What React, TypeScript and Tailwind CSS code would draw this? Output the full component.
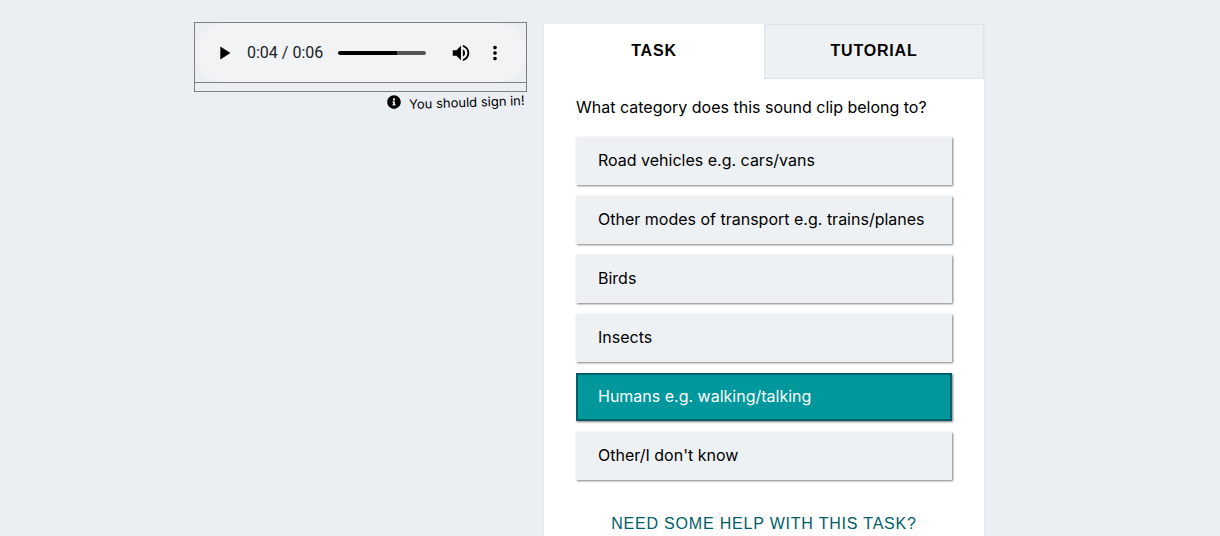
import { useState } from "react";
import { MdMoreVert, MdPlayArrow, MdVolumeUp } from "react-icons/md";
import { FaInfoCircle } from "react-icons/fa";

const answers = [
  "Road vehicles e.g. cars/vans",
  "Other modes of transport e.g. trains/planes",
  "Birds",
  "Insects",
  "Humans e.g. walking/talking",
  "Other/I don't know",
];

function AudioPlayer() {
  return (
    <section aria-label="Sound clip" className="min-w-0">
      <div className="border border-[#7d8080] pb-2">
        <div className="border-b border-[#7d8080]">
          <div className="flex h-[59px] items-center rounded-full bg-[#f1f3f4] pr-5 pl-[18px] text-black">
            <button type="button" aria-label="Play" className="flex">
              <MdPlayArrow size={22} />
            </button>
            <span className="ml-3 font-[Roboto,sans-serif] text-[16px] whitespace-nowrap text-[#202124]">
              0:04 / 0:06
            </span>
            <input
              type="range"
              aria-label="Position"
              min={0}
              max={6}
              defaultValue={4}
              className="mr-6 ml-[15px] h-1 min-w-0 flex-1 appearance-none rounded-full bg-[linear-gradient(to_right,#000_67%,#555_67%)] [&::-webkit-slider-thumb]:size-0 [&::-webkit-slider-thumb]:appearance-none"
            />
            <button type="button" aria-label="Mute" className="flex">
              <MdVolumeUp size={22} />
            </button>
            <button type="button" aria-label="More options" className="ml-3 flex">
              <MdMoreVert size={22} />
            </button>
          </div>
        </div>
      </div>
      <p className="flex items-center justify-end gap-2 pr-[2px] text-[13px] leading-5 text-black">
        <FaInfoCircle size={14} />
        <span className="-rotate-2">You should sign in!</span>
      </p>
    </section>
  );
}

export default function App() {
  const [tab, setTab] = useState("task");
  const [choice, setChoice] = useState(4);
  const tabs = [
    { id: "task", label: "TASK" },
    { id: "tutorial", label: "TUTORIAL" },
  ];

  return (
    <main className="grid min-h-screen grid-cols-[333fr_442fr] gap-4 bg-[#ebeff4] pt-[22px] pr-[235px] pl-[194px] font-[Inter,sans-serif]">
      <AudioPlayer />
      <section className="mt-px min-w-0 border border-b-0 border-[#e6eaed] bg-white">
        <div role="tablist" className="grid grid-cols-2">
          {tabs.map(({ id, label }) => (
            <button
              key={id}
              type="button"
              role="tab"
              aria-selected={tab === id}
              onClick={() => setTab(id)}
              className={`h-[55px] border pb-[2px] font-['Liberation_Sans',sans-serif] text-[16px] font-bold tracking-wider text-black ${
                tab === id ? "border-white bg-white" : "border-[#dde5ea] bg-[#eef1f4]"
              }`}
            >
              {label}
            </button>
          ))}
        </div>
        <div className="px-8 pt-4">
          <fieldset>
            <legend className="mb-[18px] text-[16px] leading-6 text-black">
              What category does this sound clip belong to?
            </legend>
            <div className="grid gap-[11px]">
              {answers.map((answer, index) => (
                <label
                  key={answer}
                  className={`relative flex min-h-12 cursor-pointer items-center border-2 pb-[2px] pl-5 text-[16px] leading-6 shadow-[1px_1px_2px_rgba(0,0,0,0.5)] ${
                    choice === index
                      ? "border-[#005d69] bg-[#00979d] text-white"
                      : "border-[#eef1f4] bg-[#eef1f4] text-black"
                  }`}
                >
                  <input
                    type="radio"
                    name="category"
                    className="sr-only"
                    checked={choice === index}
                    onChange={() => setChoice(index)}
                  />
                  {answer}
                </label>
              ))}
            </div>
          </fieldset>
          <button
            type="button"
            className="mt-8 block w-full text-center font-['Liberation_Sans',sans-serif] text-[16px] leading-6 tracking-wider text-[#005d69]"
          >
            NEED SOME HELP WITH THIS TASK?
          </button>
        </div>
      </section>
    </main>
  );
}
